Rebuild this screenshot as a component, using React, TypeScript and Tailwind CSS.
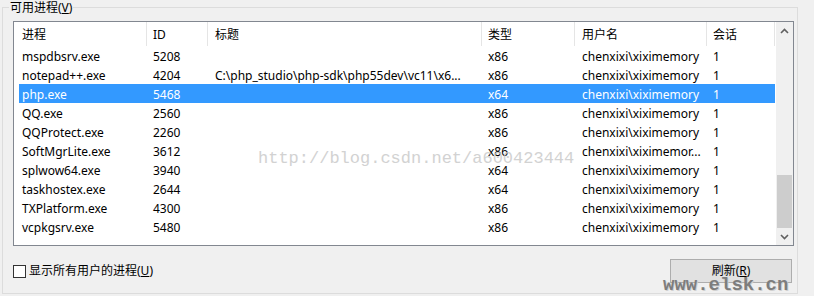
import React from "react";

const rows: [string, string, string, string, string, string][] = [
  ["mspdbsrv.exe", "5208", "", "x86", "chenxixi\\xiximemory", "1"],
  ["notepad++.exe", "4204", "C:\\php_studio\\php-sdk\\php55dev\\vc11\\x6...", "x86", "chenxixi\\xiximemory", "1"],
  ["php.exe", "5468", "", "x64", "chenxixi\\xiximemory", "1"],
  ["QQ.exe", "2560", "", "x86", "chenxixi\\xiximemory", "1"],
  ["QQProtect.exe", "2260", "", "x86", "chenxixi\\xiximemory", "1"],
  ["SoftMgrLite.exe", "3612", "", "x86", "chenxixi\\xiximemor...", "1"],
  ["splwow64.exe", "3940", "", "x64", "chenxixi\\xiximemory", "1"],
  ["taskhostex.exe", "2644", "", "x64", "chenxixi\\xiximemory", "1"],
  ["TXPlatform.exe", "4300", "", "x86", "chenxixi\\xiximemory", "1"],
  ["vcpkgsrv.exe", "5480", "", "x86", "chenxixi\\xiximemory", "1"],
];

const font = {
  fontFamily: '"Noto Sans", "Noto Sans CJK SC", sans-serif',
};

export default function App() {
  return (
    <div
      className="relative w-[814px] h-[296px] overflow-hidden bg-[#f0f0f0] pt-[7px] pl-[2px] text-[12px] text-black"
      style={font}
    >
      <div className="w-[796px] h-[287px] border border-[#dcdcdc] flex flex-col">
        <div className="-mt-[8px] ml-[6px] px-[1px] h-[16px] leading-[16px] w-fit bg-[#f0f0f0]">
          可用进程(<span className="underline">V</span>)
        </div>
        <div className="mt-[5px] ml-[10px] w-[781px] h-[225px] border border-[#828790] bg-white flex">
          <div className="w-[761px] flex flex-col">
            <div className="flex h-[24px] items-center">
              <div className="w-[133px] h-full pl-[8px] pt-[1px] flex items-center border-r border-[#e5e5e5]">进程</div>
              <div className="w-[61px] h-full pl-[6px] pt-[1px] flex items-center border-r border-[#e5e5e5]">ID</div>
              <div className="w-[274px] h-full pl-[7px] pt-[1px] flex items-center border-r border-[#e5e5e5]">标题</div>
              <div className="w-[93px] h-full pl-[6px] pt-[1px] flex items-center border-r border-[#e5e5e5]">类型</div>
              <div className="w-[132px] h-full pl-[7px] pt-[1px] flex items-center border-r border-[#e5e5e5]">用户名</div>
              <div className="w-[68px] h-full pl-[6px] pt-[1px] flex items-center border-r border-[#e5e5e5]">会话</div>
            </div>
            {rows.map((r, i) => {
              const sel = i === 2;
              return (
                <div key={i} className="flex h-[19px]">
                  <div
                    className={`ml-[5px] flex h-full pt-[3px] items-center whitespace-nowrap ${
                      sel ? "bg-[#3399ff] text-white" : ""
                    }`}
                  >
                    <div className="w-[128px] pl-[3px]">{r[0]}</div>
                    <div className="w-[61px] pl-[6px]">{r[1]}</div>
                    <div className="w-[274px] pl-[7px] overflow-hidden">{r[2]}</div>
                    <div className="w-[93px] pl-[6px]">{r[3]}</div>
                    <div className="w-[132px] pl-[7px] overflow-hidden">{r[4]}</div>
                    <div className="w-[68px] pl-[6px]">{r[5]}</div>
                  </div>
                </div>
              );
            })}
          </div>
          <div className="ml-[1px] w-[17px] h-full bg-[#f0f0f0] flex flex-col">
            <div className="h-[17px] flex items-center justify-center">
              <svg width="9" height="6" viewBox="0 0 9 6">
                <path d="M1 5 L4.5 1.5 L8 5" stroke="#606060" strokeWidth="1.6" fill="none" />
              </svg>
            </div>
            <div className="flex-1 flex flex-col justify-end px-[1px]">
              <div className="h-[53px] bg-[#cdcdcd]" />
            </div>
            <div className="h-[17px] flex items-center justify-center">
              <svg width="9" height="6" viewBox="0 0 9 6">
                <path d="M1 1 L4.5 4.5 L8 1" stroke="#606060" strokeWidth="1.6" fill="none" />
              </svg>
            </div>
          </div>
        </div>
        <div className="mt-[13px] ml-[10px] w-[779px] h-[24px] flex items-center justify-between">
          <div className="flex items-center">
            <div className="w-[13px] h-[13px] border border-[#333333] bg-white" />
            <span className="ml-[3px]">
              显示所有用户的进程(<span className="underline">U</span>)
            </span>
          </div>
          <div className="w-[122px] h-[24px] border border-[#adadad] bg-[#e1e1e1] flex items-center justify-center">
            刷新(<span className="underline">R</span>)
          </div>
        </div>
      </div>

      <div
        className="absolute left-[258px] top-[149px] text-[17px] leading-[20px] text-[#c8c8c8] opacity-80"
        style={{ fontFamily: '"Liberation Mono", monospace' }}
      >
        http://blog.csdn.net/a600423444
      </div>
      <div
        className="absolute left-[663px] top-[274px] text-[19px] leading-[22px] font-bold text-[#7d7d7d]"
        style={{ fontFamily: '"Liberation Mono", monospace', textShadow: "1px 1px 0 #d0d0d0" }}
      >
        www.elsk.cn
      </div>
    </div>
  );
}
